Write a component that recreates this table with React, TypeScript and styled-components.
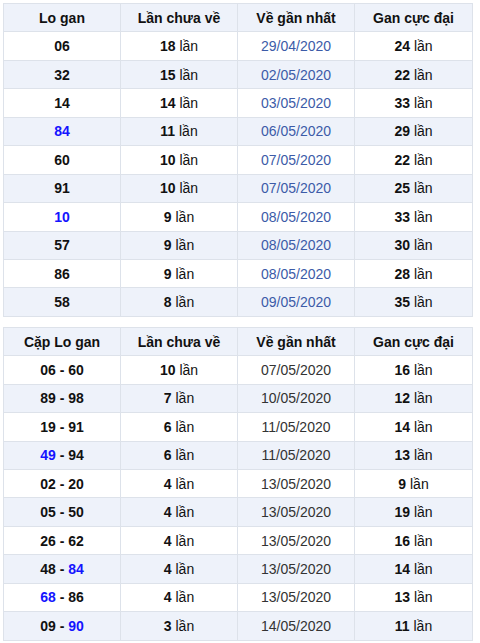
import React from "react";
import styled, { createGlobalStyle } from "styled-components";

const Global = createGlobalStyle`
  html, body { margin: 0; padding: 0; background: #fff; }
  body { font-family: Arial, "Liberation Sans", Helvetica, sans-serif; }
`;

const Page = styled.div`
  width: 470px;
  padding: 3px 0 0 3px;
  display: flex;
  flex-direction: column;
  gap: 10px;
`;

const Table = styled.div`
  border: 1px solid #dde2ea;
  border-bottom: none;
  display: flex;
  flex-direction: column;
`;

const Row = styled.div<{ $alt?: boolean }>`
  display: grid;
  grid-template-columns: repeat(4, 1fr);
  height: 28.45px;
  box-sizing: border-box;
  border-bottom: 1px solid #dde2ea;
  background: ${(p) => (p.$alt ? "#eef2fa" : "#ffffff")};
`;

const Cell = styled.div<{ $kind?: "head" | "num" | "date" | "date2" | "count" }>`
  display: flex;
  align-items: center;
  justify-content: center;
  border-right: 1px solid #dde2ea;
  font-size: 14px;
  color: ${(p) =>
    p.$kind === "date" ? "#3c5ba8" : p.$kind === "date2" ? "#333" : "#111"};
  font-weight: ${(p) => (p.$kind === "head" || p.$kind === "num" ? 700 : 400)};
  &:last-child { border-right: none; }
`;

const B = styled.b`
  font-weight: 700;
  color: #111;
`;

const Hot = styled.span`
  color: #1414ff;
`;

const Times = ({ n }: { n: number }) => (
  <>
    <B>{n}</B>&nbsp;lần
  </>
);

const t1: [string, number, string, number, boolean][] = [
  ["06", 18, "29/04/2020", 24, false],
  ["32", 15, "02/05/2020", 22, false],
  ["14", 14, "03/05/2020", 33, false],
  ["84", 11, "06/05/2020", 29, true],
  ["60", 10, "07/05/2020", 22, false],
  ["91", 10, "07/05/2020", 25, false],
  ["10", 9, "08/05/2020", 33, true],
  ["57", 9, "08/05/2020", 30, false],
  ["86", 9, "08/05/2020", 28, false],
  ["58", 8, "09/05/2020", 35, false],
];

const t2: [string, string, boolean, boolean, number, string, number][] = [
  ["06", "60", false, false, 10, "07/05/2020", 16],
  ["89", "98", false, false, 7, "10/05/2020", 12],
  ["19", "91", false, false, 6, "11/05/2020", 14],
  ["49", "94", true, false, 6, "11/05/2020", 13],
  ["02", "20", false, false, 4, "13/05/2020", 9],
  ["05", "50", false, false, 4, "13/05/2020", 19],
  ["26", "62", false, false, 4, "13/05/2020", 16],
  ["48", "84", false, true, 4, "13/05/2020", 14],
  ["68", "86", true, false, 4, "13/05/2020", 13],
  ["09", "90", false, true, 3, "14/05/2020", 11],
];

export default function App() {
  return (
    <>
      <Global />
      <Page>
        <Table>
          <Row $alt>
            <Cell $kind="head">Lo gan</Cell>
            <Cell $kind="head">Lần chưa về</Cell>
            <Cell $kind="head">Về gần nhất</Cell>
            <Cell $kind="head">Gan cực đại</Cell>
          </Row>
          {t1.map(([lo, c, d, g, hot], i) => (
            <Row key={lo} $alt={i % 2 === 1}>
              <Cell $kind="num">{hot ? <Hot>{lo}</Hot> : lo}</Cell>
              <Cell $kind="count"><Times n={c} /></Cell>
              <Cell $kind="date">{d}</Cell>
              <Cell $kind="count"><Times n={g} /></Cell>
            </Row>
          ))}
        </Table>
        <Table>
          <Row $alt>
            <Cell $kind="head">Cặp Lo gan</Cell>
            <Cell $kind="head">Lần chưa về</Cell>
            <Cell $kind="head">Về gần nhất</Cell>
            <Cell $kind="head">Gan cực đại</Cell>
          </Row>
          {t2.map(([a, b, ha, hb, c, d, g], i) => (
            <Row key={a + b} $alt={i % 2 === 1}>
              <Cell $kind="num">
                {ha ? <Hot>{a}</Hot> : a}&nbsp;-&nbsp;{hb ? <Hot>{b}</Hot> : b}
              </Cell>
              <Cell $kind="count"><Times n={c} /></Cell>
              <Cell $kind="date2">{d}</Cell>
              <Cell $kind="count"><Times n={g} /></Cell>
            </Row>
          ))}
        </Table>
      </Page>
    </>
  );
}
